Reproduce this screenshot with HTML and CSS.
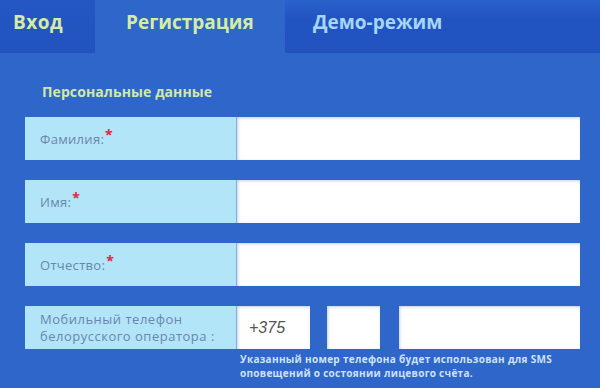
FILE: index.html
```html
<!DOCTYPE html>
<html lang="ru">
<head>
<meta charset="utf-8">
<link rel="stylesheet" href="styles.css">
</head>
<body>
<div class="page">
  <div class="tabs">
    <div class="tab tab-login">Вход</div>
    <div class="tab tab-active">Регистрация</div>
    <div class="tab tab-demo">Демо-режим</div>
  </div>
  <div class="panel">
    <div class="section-title">Персональные данные</div>
    <div class="row">
      <div class="label">Фамилия:<span class="req">*</span></div>
      <div class="input"></div>
    </div>
    <div class="row">
      <div class="label">Имя:<span class="req">*</span></div>
      <div class="input"></div>
    </div>
    <div class="row">
      <div class="label">Отчество:<span class="req">*</span></div>
      <div class="input"></div>
    </div>
    <div class="row row-phone">
      <div class="label label-two">Мобильный телефон<br>белорусского оператора :</div>
      <div class="phone">
        <div class="input code">+375</div>
        <div class="input op"></div>
        <div class="input num"></div>
      </div>
    </div>
    <div class="note">Указанный номер телефона будет использован для SMS<br>оповещений о состоянии лицевого счёта.</div>
  </div>
</div>
</body>
</html>
```
FILE: styles.css
```css
html, body {
  margin: 0;
  padding: 0;
  background: #2e66ca;
}
.page {
  width: 600px;
  height: 388px;
  overflow: hidden;
  font-family: "Open Sans", "Lato", sans-serif;
  background: #2e66ca;
}
.tabs {
  display: flex;
  height: 53px;
}
.tab {
  font-weight: bold;
  font-size: 19px;
  line-height: 45px;
  color: #d5eca4;
  box-sizing: border-box;
}
.tab-login {
  width: 95px;
  padding-left: 13px;
  letter-spacing: 0.5px;
  background: linear-gradient(180deg, #2457c3 0%, #2253c0 100%);
}
.tab-active {
  width: 190px;
  padding-left: 31px;
  background: #2e66ca;
}
.tab-demo {
  flex: 1;
  padding-left: 28px;
  color: #a6d6f4;
  background: linear-gradient(180deg, #2a62cc 0%, #2254c1 35%, #2152c0 100%);
}
.panel {
  padding: 30px 20px 0 25px;
}
.section-title {
  font-weight: bold;
  font-size: 14px;
  color: #d3e8a6;
  padding-left: 17px;
  height: 34px;
  line-height: 17px;
  letter-spacing: 0.1px;
}
.row {
  display: flex;
  height: 43px;
  margin-bottom: 20px;
}
.label {
  width: 212px;
  box-sizing: border-box;
  background: #b2e5f8;
  border-right: 1px solid #7bb3e4;
  color: #6a86ad;
  font-size: 13px;
  letter-spacing: 0.3px;
  padding-left: 15px;
  display: flex;
  align-items: center;
}
.req {
  color: #e0253a;
  font-size: 14px;
  font-weight: bold;
  align-self: flex-start;
  margin-top: 8px;
  margin-left: 1px;
}
.input {
  flex: 1;
  background: #fff;
  box-shadow: inset 1px 1px 3px rgba(90, 110, 200, 0.35);
}
.row-phone {
  margin-bottom: 3px;
}
.label-two {
  line-height: 17px;
  letter-spacing: 0.5px;
}
.phone {
  flex: 1;
  display: flex;
  gap: 17px;
}
.code {
  flex: 0 0 73px;
  color: #555;
  font-style: italic;
  font-size: 16px;
  letter-spacing: 0;
  padding-left: 12px;
  box-sizing: border-box;
  display: flex;
  align-items: center;
  font-family: "Liberation Sans", sans-serif;
}
.op {
  flex: 0 0 53px;
}
.num {
  flex: 1;
  margin-left: 2px;
}
.note {
  margin-left: 215px;
  margin-top: 1px;
  font-size: 10px;
  font-weight: bold;
  line-height: 14px;
  letter-spacing: 0.3px;
  color: #cfe2f5;
}
```
